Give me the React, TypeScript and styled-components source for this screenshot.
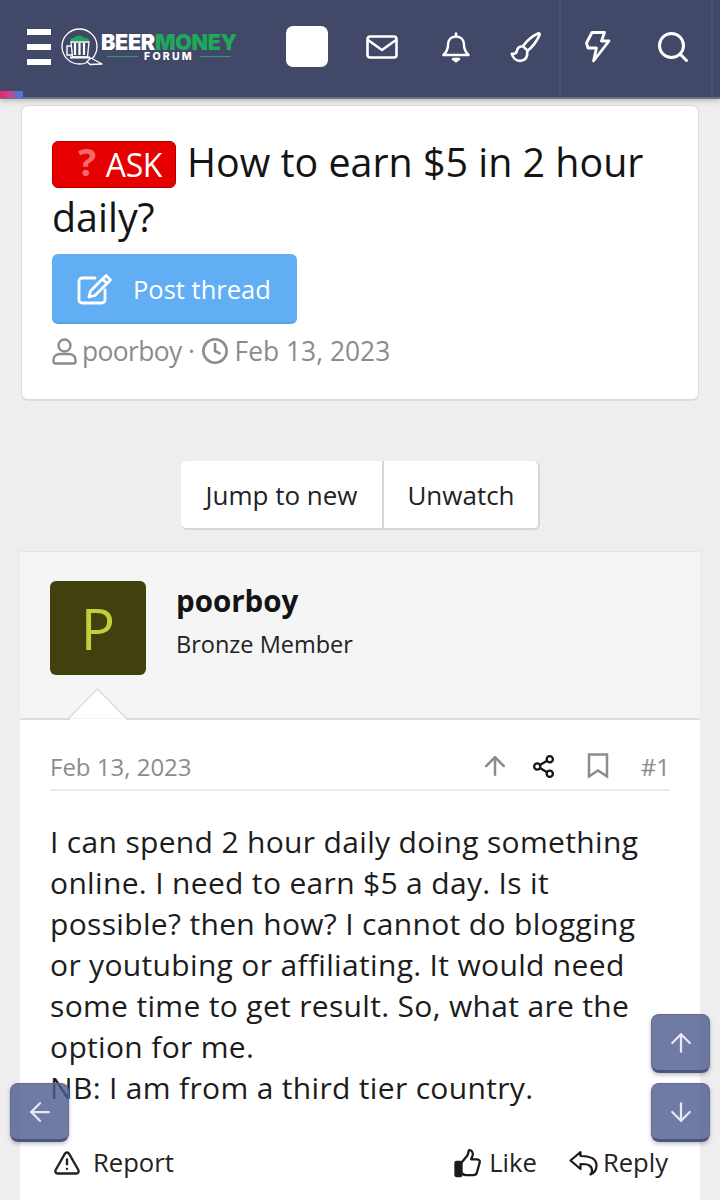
import React from "react";
import styled, { createGlobalStyle } from "styled-components";
import { Search, Clock, ArrowUp, ArrowDown, ArrowLeft, Share2, TriangleAlert } from "lucide-react";

const Global = createGlobalStyle`
  html, body { margin: 0; padding: 0; background: #eeeeee; }
  body { font-family: "Open Sans", "Liberation Sans", sans-serif; color: #141414; }
  * { box-sizing: border-box; }
`;

const Page = styled.div`
  position: relative;
  width: 720px;
  height: 1200px;
  overflow: hidden;
  background: #eeeeee;
  display: flex;
  flex-direction: column;
`;

const Header = styled.header`
  position: relative;
  z-index: 1;
  flex: none;
  height: 99px;
  background: #414868;
  border-bottom: 2px solid #6d7387;
  box-shadow: 0 2px 5px rgba(0, 0, 0, 0.22);
  display: flex;
  align-items: center;
  padding-left: 27px;
`;

const Accent = styled.div`
  position: absolute;
  left: 0;
  bottom: -1px;
  width: 23px;
  height: 7px;
  background: linear-gradient(90deg, #e8246c 0%, #c9478f 45%, #4a78d8 85%);
`;

const Burger = styled.div`
  width: 24px;
  display: flex;
  flex-direction: column;
  gap: 9px;
  margin-top: -4px;
  span { display: block; height: 6px; background: #ffffff; }
`;

const Logo = styled.div`
  display: flex;
  align-items: center;
  margin-left: 9px;
  margin-top: -1px;
  width: 178px;
`;

const LogoWords = styled.div`
  display: flex;
  flex-direction: column;
  align-items: center;
  margin-left: -3px;
  margin-top: -3px;
`;

const LogoTop = styled.div`
  font-family: Inter, "Liberation Sans", sans-serif;
  font-weight: 900;
  font-size: 21.5px;
  line-height: 21px;
  letter-spacing: -0.3px;
  color: #ffffff;
  b { font-weight: 900; color: #1fa75a; }
`;

const LogoSub = styled.div`
  display: flex;
  align-items: center;
  gap: 6px;
  font-family: Inter, "Liberation Sans", sans-serif;
  font-weight: 800;
  font-size: 10.5px;
  line-height: 10px;
  letter-spacing: 2.2px;
  color: #ffffff;
  margin-top: -1px;
  i { display: block; width: 31px; height: 1px; background: #2f9b74; }
`;

const WhiteSquare = styled.div`
  width: 42px;
  height: 41px;
  margin-left: 48px;
  margin-top: -5px;
  background: #ffffff;
  border-radius: 7px;
`;

const Nav = styled.nav`
  display: flex;
  height: 100%;
  margin-left: auto;
  align-items: flex-start;
`;

const NavGroup = styled.div<{ $divider?: boolean }>`
  display: flex;
  align-items: center;
  height: 96px;
  border-left: ${(p) => (p.$divider ? "2px solid #4d5475" : "none")};
  border-right: ${(p) => (p.$divider ? "2px solid #4d5475" : "none")};
`;

const NavItem = styled.div<{ $w: number }>`
  width: ${(p) => p.$w}px;
  display: flex;
  justify-content: center;
  align-items: center;
  color: #ffffff;
  margin-top: -2px;
`;

const Main = styled.main`
  flex: 1;
  display: flex;
  flex-direction: column;
  padding-top: 6px;
`;

const TitleCard = styled.section`
  flex: none;
  margin: 0 21px;
  height: 296px;
  background: #ffffff;
  border: 1px solid #dcdcdc;
  border-bottom-width: 2px;
  border-radius: 7px;
  padding: 30px 30px 0;
`;

const Title = styled.h1`
  margin: -1px 0 0;
  font-weight: 400;
  font-size: 39.4px;
  line-height: 55px;
  color: #141414;
`;

const Label = styled.span`
  display: inline-flex;
  align-items: center;
  justify-content: flex-end;
  vertical-align: 1px;
  width: 124px;
  height: 47px;
  padding-right: 13px;
  gap: 10px;
  background: #e60000;
  border: 1px solid #b50000;
  border-radius: 6px;
  font-size: 32px;
  line-height: 45px;
  letter-spacing: -0.4px;
  color: #ffffff;
  margin-right: 11px;
  b { font-weight: 700; color: #f56a6a; font-size: 38px; line-height: 40px; margin-top: -6px; }
`;

const PostButton = styled.div`
  display: flex;
  align-items: center;
  width: 245px;
  height: 70px;
  margin-top: 9px;
  padding: 1px 0 0 25px;
  gap: 20px;
  background: #62aef5;
  border-radius: 6px;
  border-bottom: 2px solid #56a2e8;
  color: #ffffff;
  font-size: 25.5px;
`;

const Meta = styled.div`
  display: flex;
  align-items: center;
  margin-top: 9px;
  color: #8c8c8c;
  font-size: 26.4px;
  line-height: 36px;
  svg { flex: none; }
`;

const MetaText = styled.span<{ $gap: number; $tight?: boolean }>`
  margin-left: ${(p) => p.$gap}px;
  letter-spacing: ${(p) => (p.$tight ? "-0.6px" : "0")};
`;

const Jump = styled.div`
  flex: none;
  align-self: flex-start;
  display: flex;
  margin: 60px 0 0 181px;
  height: 69px;
  background: #ffffff;
  border-radius: 6px;
  border-right: 2px solid #d6d6d6;
  border-bottom: 2px solid #d6d6d6;
  font-size: 26px;
  color: #222222;
  width: 359px;
`;

const JumpItem = styled.div<{ $w: number; $line?: boolean }>`
  width: ${(p) => p.$w}px;
  display: flex;
  align-items: center;
  justify-content: center;
  border-right: ${(p) => (p.$line ? "2px solid #d6d6d6" : "none")};
`;

const Post = styled.article`
  flex: 1;
  margin: 21px 20px 0;
  background: #ffffff;
  border-top: 1px solid #e4e4e4;
`;

const UserBar = styled.div`
  position: relative;
  height: 168px;
  background: #f5f5f5;
  border-bottom: 2px solid #dddddd;
  display: flex;
  padding: 29px 30px 0;
`;

const Avatar = styled.div`
  width: 96px;
  height: 94px;
  background: #41400f;
  border-radius: 6px;
  display: flex;
  align-items: center;
  justify-content: center;
  color: #c3cf3a;
  font-size: 57px;
  line-height: 1;
`;

const UserText = styled.div`
  margin-left: 30px;
  display: flex;
  flex-direction: column;
`;

const UserName = styled.div`
  font-weight: 700;
  font-size: 29.5px;
  line-height: 40px;
  color: #141414;
`;

const UserRole = styled.div`
  font-size: 23.5px;
  line-height: 32px;
  margin-top: 7px;
  color: #222222;
`;

const Caret = styled.svg`
  position: absolute;
  left: 47px;
  bottom: -2px;
`;

const PostBody = styled.div`
  padding: 0 30px;
`;

const PostMeta = styled.div`
  display: flex;
  align-items: center;
  height: 71px;
  padding-top: 23px;
  border-bottom: 2px solid #ececec;
  color: #8c8c8c;
  font-size: 24px;
`;

const PostMetaIcons = styled.div`
  margin-left: auto;
  display: flex;
  align-items: center;
`;

const MetaIcon = styled.div<{ $w: number; $dark?: boolean }>`
  width: ${(p) => p.$w}px;
  display: flex;
  justify-content: center;
  color: ${(p) => (p.$dark ? "#141414" : "#8c8c8c")};
`;

const PostNumber = styled.span`
  margin-left: 15px;
`;

const Message = styled.p`
  margin: 30px 0 0;
  font-size: 30px;
  line-height: 41px;
  letter-spacing: 0.33px;
  color: #1c1c1c;
`;

const Actions = styled.div`
  display: flex;
  align-items: center;
  margin: 37px 2px 0 0;
  font-size: 25.6px;
  line-height: 36px;
  color: #222222;
`;

const Action = styled.div<{ $gap: number; $left?: number; $push?: boolean }>`
  display: flex;
  align-items: center;
  gap: ${(p) => p.$gap}px;
  margin-left: ${(p) => (p.$push ? "auto" : `${p.$left ?? 0}px`)};
`;

const Scroll = styled.div<{ $x: number; $y: number }>`
  position: absolute;
  z-index: 2;
  left: ${(p) => p.$x}px;
  top: ${(p) => p.$y}px;
  width: 59px;
  height: 59px;
  display: flex;
  align-items: center;
  justify-content: center;
  color: #e6e9f4;
  background: rgba(76, 90, 141, 0.8);
  border: 1px solid #5f6a96;
  border-bottom: 3px solid #4a5480;
  border-radius: 8px;
  box-shadow: 0 2px 4px rgba(0, 0, 0, 0.25);
`;

const MailIcon = () => (
  <svg width="32" height="24" viewBox="0 0 32 24" fill="none" stroke="#fff" strokeWidth="2.600" strokeLinejoin="round" strokeLinecap="round">
    <rect x="1.500" y="1.500" width="29" height="21" rx="2.500" />
    <path d="M2 5l14 10L30 5" />
  </svg>
);

const BellIcon = () => (
  <svg width="28" height="31" viewBox="0 0 28 31" fill="none" stroke="#fff" strokeWidth="2.500" strokeLinejoin="round" strokeLinecap="round">
    <path d="M14 4.500c-5 0-8 3.500-8 8.500 0 5-2 7.500-4.500 10h25c-2.500-2.500-4.500-5-4.500-10 0-5-3-8.500-8-8.500z" />
    <path d="M14 1.500v2.500" />
    <path d="M11 27h6l-3 2.200z" fill="#fff" />
  </svg>
);

const BrushIcon = () => (
  <svg width="32" height="32" viewBox="0 0 32 32" fill="none" stroke="#fff" strokeWidth="2.600" strokeLinejoin="round" strokeLinecap="round">
    <path d="M28 2.500c1.300-.6 2 .4 1.500 1.600-2.600 5.800-7.600 12.200-12 15.600l-4.600-4.600C16 11 22 5.200 28 2.500z" />
    <path d="M12.800 15.200c-3.400 0-5.600 2-6 5-.3 2.200-2 3-5 2.600 1 4.400 4.600 7.400 9 7 4.600-.4 7-4.200 6.500-10.200" />
  </svg>
);

const BoltIcon = () => (
  <svg width="26" height="32" viewBox="0 0 26 32" fill="none" stroke="#fff" strokeWidth="2.800" strokeLinejoin="round">
    <path d="M7 1.500h12.500l-3 8.500H24L8.500 30l3-13H3L1.500 12z" />
  </svg>
);

const EditIcon = () => (
  <svg width="36" height="32" viewBox="0 0 36 32" fill="none" stroke="#fff" strokeWidth="2.800" strokeLinejoin="round" strokeLinecap="round">
    <path d="M18 5H5a3 3 0 0 0-3 3v19a3 3 0 0 0 3 3h20a3 3 0 0 0 3-3V17" />
    <path d="M29 2.500l4.500 4.500L18 22.500l-6 1.500 1.500-6z" />
    <path d="M25.500 6l4.500 4.500" />
  </svg>
);

const UserIcon = () => (
  <svg width="25" height="27" viewBox="0 0 25 27" fill="none" stroke="#8c8c8c" strokeWidth="2.400" strokeLinejoin="round">
    <circle cx="12.500" cy="7.500" r="6" />
    <path d="M8.500 16h8c4.500 0 7 2.500 7 6v1.500a2 2 0 0 1-2 2h-18a2 2 0 0 1-2-2V22c0-3.500 2.500-6 7-6z" />
  </svg>
);

const BookmarkIcon = () => (
  <svg width="22" height="26" viewBox="0 0 22 26" fill="none" stroke="#8c8c8c" strokeWidth="2.500" strokeLinejoin="miter">
    <path d="M2 1.500h18v22l-9-6-9 6z" />
  </svg>
);

const ThumbIcon = () => (
  <svg width="28" height="29" viewBox="0 0 28 29" fill="none" stroke="#1a1a1a" strokeWidth="2.300" strokeLinejoin="round" strokeLinecap="round">
    <path d="M8 13l5-6c1-1.500 1.500-3 1.500-4.500 0-1.200 1-1.700 2-1.200 2.500 1.200 2.800 4.200 1.500 7l-.8 2h6c2 0 3 1.800 2.400 3.400l-2.600 9.500c-.5 1.800-1.700 3-3.700 3H12c-1.500 0-2.800-.8-4-1.700" />
    <rect x="1.500" y="13" width="6" height="14" rx="1" fill="#1a1a1a" />
  </svg>
);

const ReplyIcon = () => (
  <svg width="29" height="26" viewBox="0 0 29 26" fill="none" stroke="#1a1a1a" strokeWidth="2.200" strokeLinejoin="round" strokeLinecap="round">
    <path d="M11.500 2L1.500 10.500l10 8.500v-5c7 0 11.500 1 11.500 6.500 0 1.500-.5 3-1.500 4 4.500-2 6-6 6-9 0-6.500-6-9.500-16-9.500z" />
  </svg>
);

const LogoMark = () => (
  <svg width="44" height="40" viewBox="0 0 44 40" fill="none">
    <circle cx="19.500" cy="18.500" r="17.500" stroke="#fff" strokeWidth="1.300" fill="#414868" />
    <path d="M31 30l11 6-12 .5-3-3z" fill="#414868" stroke="#fff" strokeWidth="1.300" strokeLinejoin="round" />
    <path d="M10 13c0-3 3-3 4-3 1-3 9-3 10 0 2 0 5 0 5 3z" fill="#1fa75a" />
    <path d="M11 14h18l-1.500 15h-15z" stroke="#fff" strokeWidth="1.300" fill="none" />
    <path d="M15 15v12M19.500 15v12M24 15v12" stroke="#fff" strokeWidth="2.200" />
    <path d="M11 18H7v9h5" stroke="#fff" strokeWidth="1.400" />
    <path d="M10 29.500h20" stroke="#fff" strokeWidth="2" />
  </svg>
);

export default function App() {
  return (
    <Page>
      <Global />
      <Header>
        <Burger><span /><span /><span /></Burger>
        <Logo>
          <LogoMark />
          <LogoWords>
            <LogoTop>BEER<b>MONEY</b></LogoTop>
            <LogoSub><i />FORUM<i /></LogoSub>
          </LogoWords>
        </Logo>
        <WhiteSquare />
        <Nav>
          <NavGroup>
            <NavItem $w={74}><MailIcon /></NavItem>
            <NavItem $w={74}><BellIcon /></NavItem>
            <NavItem $w={66}><BrushIcon /></NavItem>
          </NavGroup>
          <NavGroup $divider>
            <NavItem $w={74}><BoltIcon /></NavItem>
            <NavItem $w={76}><Search size={36} strokeWidth={2} /></NavItem>
          </NavGroup>
          <NavGroup><NavItem $w={7} /></NavGroup>
        </Nav>
        <Accent />
      </Header>
      <Main>
        <TitleCard>
          <Title><Label><b>?</b>ASK</Label>How to earn $5 in 2 hour daily?</Title>
          <PostButton><EditIcon />Post thread</PostButton>
          <Meta>
            <UserIcon />
            <MetaText $gap={5} $tight>poorboy ·&nbsp;</MetaText>
            <Clock size={28} strokeWidth={2.200} />
            <MetaText $gap={6}>Feb 13, 2023</MetaText>
          </Meta>
        </TitleCard>
        <Jump>
          <JumpItem $w={203} $line>Jump to new</JumpItem>
          <JumpItem $w={154}>Unwatch</JumpItem>
        </Jump>
        <Post>
          <UserBar>
            <Avatar>P</Avatar>
            <UserText>
              <UserName>poorboy</UserName>
              <UserRole>Bronze Member</UserRole>
            </UserText>
            <Caret width="62" height="32" viewBox="0 0 62 32">
              <path d="M1 31L30.500 1 60 31z" fill="#ffffff" stroke="#dddddd" strokeWidth="1.500" />
              <path d="M3 30.500h56v1.500H3z" fill="#ffffff" />
            </Caret>
          </UserBar>
          <PostBody>
            <PostMeta>
              Feb 13, 2023
              <PostMetaIcons>
                <MetaIcon $w={46}><ArrowUp size={30} strokeWidth={2} /></MetaIcon>
                <MetaIcon $w={52} $dark><Share2 size={25} strokeWidth={2.200} /></MetaIcon>
                <MetaIcon $w={56}><BookmarkIcon /></MetaIcon>
                <PostNumber>#1</PostNumber>
              </PostMetaIcons>
            </PostMeta>
            <Message>
              I can spend 2 hour daily doing something online. I need to earn $5 a day. Is it possible? then how? I cannot do blogging or youtubing or affiliating. It would need some time to get result. So, what are the option for me.
              <br />
              NB: I am from a third tier country.
            </Message>
            <Actions>
              <Action $gap={12} $left={3}><TriangleAlert size={28} strokeWidth={2} />Report</Action>
              <Action $gap={7} $push><ThumbIcon />Like</Action>
              <Action $gap={5} $left={32}><ReplyIcon />Reply</Action>
            </Actions>
          </PostBody>
        </Post>
      </Main>
      <Scroll $x={651} $y={1014}><ArrowUp size={30} strokeWidth={1.800} /></Scroll>
      <Scroll $x={651} $y={1083}><ArrowDown size={30} strokeWidth={1.800} /></Scroll>
      <Scroll $x={10} $y={1083}><ArrowLeft size={30} strokeWidth={1.800} /></Scroll>
    </Page>
  );
}
